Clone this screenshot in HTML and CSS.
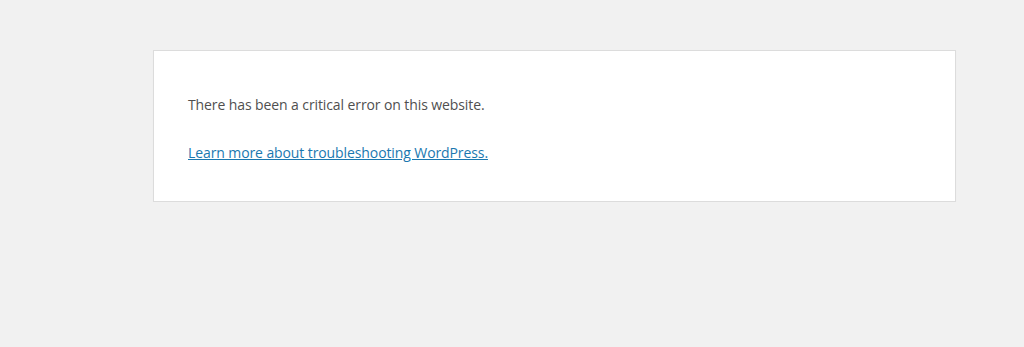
FILE: index.html
```html
<!DOCTYPE html>
<html lang="en">
<head>
<meta charset="utf-8">
<title>WordPress › Error</title>
<link rel="stylesheet" href="styles.css">
</head>
<body>
<div class="page">
  <div class="error-box">
    <p class="message">There has been a critical error on this website.</p>
    <p class="more"><a href="#">Learn more about troubleshooting WordPress.</a></p>
  </div>
</div>
</body>
</html>
```

FILE: styles.css
```css
html {
  background: #f1f1f1;
}
body {
  margin: 0;
  font-family: "Open Sans", "Noto Sans", sans-serif;
  color: #4f4f4f;
}
.page {
  padding: 50px 0 0 153px;
}
.error-box {
  box-sizing: border-box;
  width: 803px;
  background: #fff;
  border: 1px solid #dcdcdc;
  box-shadow: 0 1px 1px rgba(0, 0, 0, 0.04);
  padding: 42px 34px 36px;
}
.error-box p {
  margin: 0;
  font-size: 14px;
  line-height: 24px;
  letter-spacing: -0.1px;
}
.error-box .more {
  margin-top: 24px;
}
.error-box a {
  color: #1a78b0;
}
```
